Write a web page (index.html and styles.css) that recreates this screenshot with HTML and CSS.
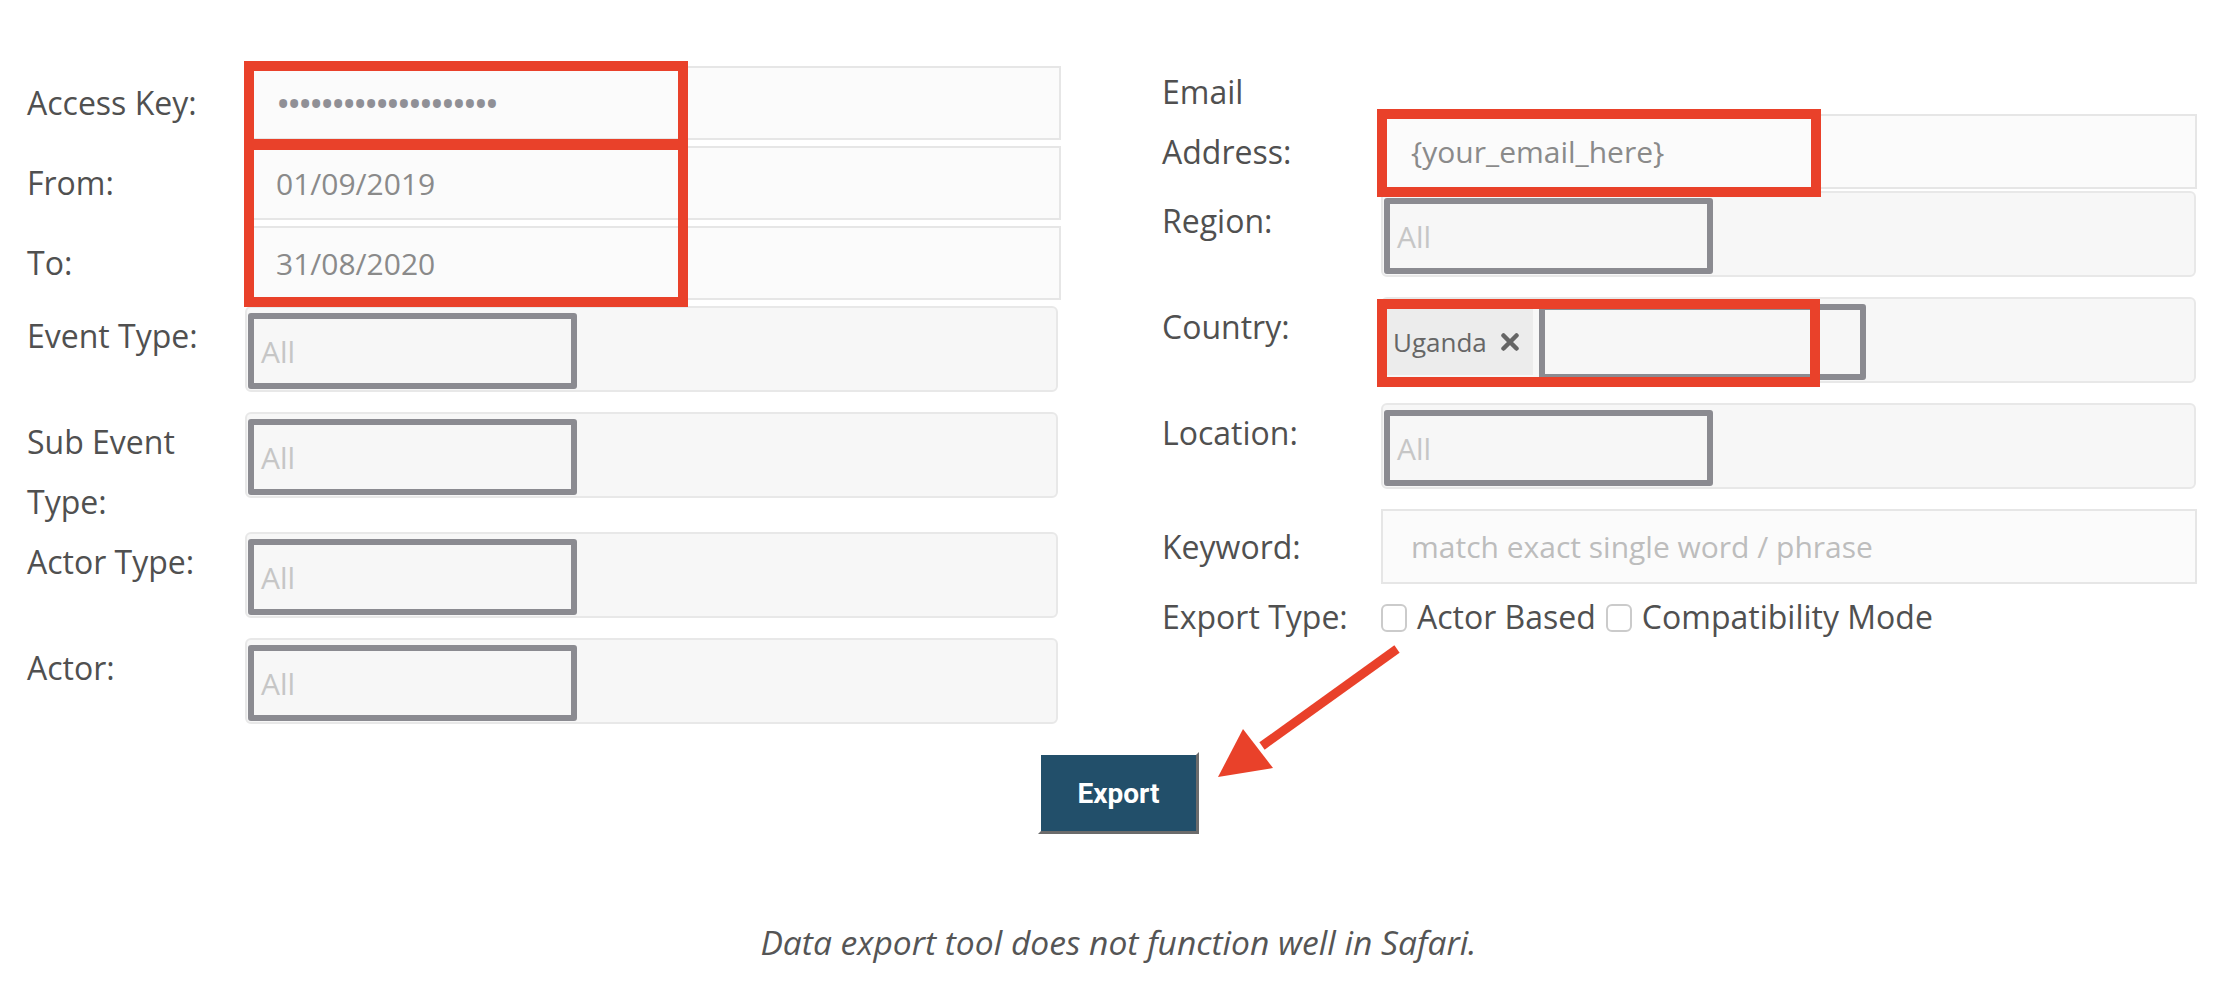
FILE: index.html
```html
<!DOCTYPE html>
<html lang="en">
<head>
<meta charset="utf-8">
<title>Data Export Tool</title>
<link rel="stylesheet" href="styles.css">
</head>
<body>
<div class="page">
  <div class="form">
    <div class="col col-left">
      <div class="row row-text">
        <div class="lbl">Access Key:</div>
        <div class="input"><span class="dots">••••••••••••••••••••</span></div>
      </div>
      <div class="row row-text">
        <div class="lbl">From:</div>
        <div class="input"><span class="val">01/09/2019</span></div>
      </div>
      <div class="row row-text">
        <div class="lbl">To:</div>
        <div class="input"><span class="val">31/08/2020</span></div>
      </div>
      <div class="row row-select">
        <div class="lbl">Event Type:</div>
        <div class="select"><div class="choice"><span class="ph">All</span></div></div>
      </div>
      <div class="row row-select">
        <div class="lbl">Sub Event Type:</div>
        <div class="select"><div class="choice"><span class="ph">All</span></div></div>
      </div>
      <div class="row row-select">
        <div class="lbl">Actor Type:</div>
        <div class="select"><div class="choice"><span class="ph">All</span></div></div>
      </div>
      <div class="row row-select">
        <div class="lbl">Actor:</div>
        <div class="select"><div class="choice"><span class="ph">All</span></div></div>
      </div>
    </div>

    <div class="col col-right">
      <div class="row row-text row-email">
        <div class="lbl">Email Address:</div>
        <div class="input"><span class="val">{your_email_here}</span></div>
      </div>
      <div class="row row-select">
        <div class="lbl">Region:</div>
        <div class="select"><div class="choice"><span class="ph">All</span></div></div>
      </div>
      <div class="row row-select">
        <div class="lbl">Country:</div>
        <div class="select select-tags">
          <span class="tag">Uganda
            <svg class="tag-x" viewBox="0 0 18 18" width="18" height="18" aria-hidden="true"><path d="M2.5 2.5 L15.5 15.5 M15.5 2.5 L2.5 15.5" stroke="#666" stroke-width="4.5" stroke-linecap="round"/></svg>
          </span>
          <div class="choice choice-search"></div>
        </div>
      </div>
      <div class="row row-select">
        <div class="lbl">Location:</div>
        <div class="select"><div class="choice"><span class="ph">All</span></div></div>
      </div>
      <div class="row row-text row-keyword">
        <div class="lbl">Keyword:</div>
        <div class="input"><span class="ph-text">match exact single word / phrase</span></div>
      </div>
      <div class="row row-check">
        <div class="lbl">Export Type:</div>
        <div class="checks">
          <span class="box"></span><span class="check-text">Actor Based</span>
          <span class="box"></span><span class="check-text">Compatibility Mode</span>
        </div>
      </div>
    </div>
  </div>

  <div class="actions">
    <button class="btn" type="button">Export</button>
  </div>

  <p class="note">Data export tool does not function well in Safari.</p>

  <div class="mark mark-key"></div>
  <div class="mark mark-dates"></div>
  <div class="mark mark-email"></div>
  <div class="mark mark-country"></div>

  <svg class="arrow" viewBox="0 0 220 160" width="220" height="160" aria-hidden="true">
    <line x1="197" y1="19" x2="62" y2="116" stroke="#e9412a" stroke-width="9"/>
    <polygon points="18,147 43,99 73,138" fill="#e9412a"/>
  </svg>
</div>
</body>
</html>
```

FILE: styles.css
```css
* { box-sizing: border-box; }

html, body {
  margin: 0;
  padding: 0;
  background: #ffffff;
}

body {
  font-family: "Open Sans", "Liberation Sans", sans-serif;
  color: #505050;
}

.page {
  position: relative;
  width: 2230px;
  height: 996px;
  overflow: hidden;
}

.form {
  display: grid;
  grid-template-columns: 1034px 1035px;
  column-gap: 101px;
  align-items: start;
  padding-left: 27px;
}

.col {
  display: flex;
  flex-direction: column;
}

.col-left { padding-top: 66px; }
.col-right { padding-top: 62px; }

.row {
  display: flex;
}

.lbl {
  flex: 0 0 auto;
  font-size: 32px;
  line-height: 60px;
  color: #505050;
  padding-right: 14px;
}

.col-left .lbl { width: 218px; }
.col-right .lbl { width: 219px; }

/* text inputs */
.row-text {
  align-items: center;
  margin-bottom: 6px;
}

.input {
  height: 75px;
  border: 2px solid #e6e6e6;
  background: #fbfbfb;
  padding-left: 28px;
  display: flex;
  align-items: center;
  font-size: 30px;
  color: #8a8a8a;
}

.col-left .input { width: 815px; height: 74px; margin-left: 1px; }
.col-right .input { width: 816px; }

.dots {
  font-size: 38px;
  letter-spacing: -3.3px;
  color: #909096;
}

.ph-text { color: #bdbdbd; }

.row-email {
  align-items: flex-end;
  margin-bottom: 2px;
}
.row-email .lbl { margin-bottom: 7px; }

.row-keyword { margin-bottom: 3px; }

/* select containers */
.row-select {
  align-items: flex-start;
}

.select {
  height: 86px;
  margin-bottom: 20px;
  border: 2px solid #e8e8e8;
  border-radius: 6px;
  background: #f7f7f7;
  padding: 5px 0 1px 1px;
  display: flex;
  align-items: center;
}

.col-left .select { width: 813px; margin-left: 0; }
.col-right .select { width: 815px; }

.choice {
  width: 329px;
  height: 76px;
  border: 6px solid #8b8b91;
  border-radius: 3px;
  background: #f7f7f7;
  padding-left: 7px;
  display: flex;
  align-items: center;
  font-size: 30px;
}

.ph { color: #c6c6c6; }

.select-tags {
  padding-left: 4px;
}

.tag {
  height: 66px;
  width: 146px;
  background: #ececec;
  color: #666666;
  font-size: 26px;
  padding-left: 6px;
  display: flex;
  align-items: center;
  flex: 0 0 auto;
}

.tag-x {
  margin-left: 14px;
  display: block;
}

.choice-search {
  width: 327px;
  height: 76px;
  margin-left: 6px;
}

/* checkboxes */
.row-check {
  align-items: center;
}

.checks {
  display: flex;
  align-items: center;
  font-size: 32px;
  line-height: 60px;
  color: #505050;
}

.box {
  width: 26px;
  height: 28px;
  border: 2px solid #cbcbcb;
  border-radius: 6px;
  background: #ffffff;
  margin-right: 10px;
  margin-top: 2px;
  flex: 0 0 auto;
}

.check-text { margin-right: 10px; }

/* actions */
.actions {
  display: flex;
  justify-content: center;
  padding-left: 7px;
  margin-top: 8px;
}

.btn {
  width: 161px;
  height: 82px;
  border-style: solid;
  border-width: 3px;
  border-color: transparent #6b6b6b #6b6b6b transparent;
  background: #224f6a;
  background-clip: padding-box;
  color: #ffffff;
  font-family: Roboto, "Liberation Sans", sans-serif;
  font-weight: 700;
  font-size: 28px;
  padding: 0;
  margin: 0;
  cursor: pointer;
}

.note {
  margin: 78px 0 0 0;
  padding-left: 7px;
  text-align: center;
  font-style: italic;
  font-size: 33.6px;
  line-height: 60px;
  color: #555555;
}

/* annotation overlays */
.mark {
  position: absolute;
  border: 10px solid #e9412a;
}

.mark-key { left: 244px; top: 61px; width: 444px; height: 89px; }
.mark-dates { left: 244px; top: 139px; width: 444px; height: 168px; }
.mark-email { left: 1377px; top: 109px; width: 444px; height: 88px; }
.mark-country { left: 1377px; top: 299px; width: 443px; height: 88px; }

.arrow {
  position: absolute;
  left: 1200px;
  top: 630px;
}
```
